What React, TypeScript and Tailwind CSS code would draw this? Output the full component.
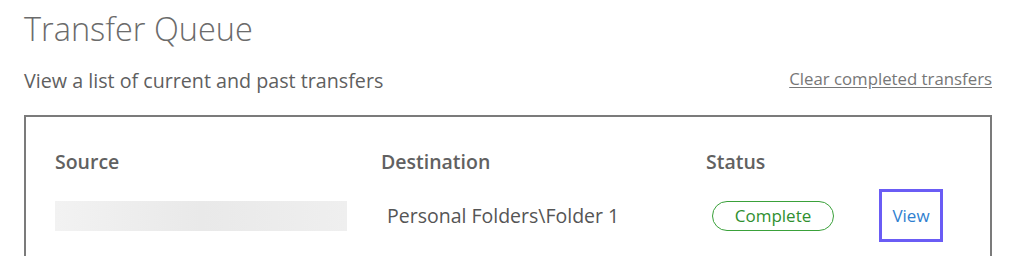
export default function App() {
  return (
    <div className="w-[1012px] h-[256px] overflow-hidden bg-white font-['Open_Sans',sans-serif] text-[#555]">
      <div className="pl-6 pr-5 pt-[7px]">
        <h1 className="text-[32.5px] font-light leading-[44px] text-[#6b6b6b]">Transfer Queue</h1>
        <div className="mt-[17px] flex items-center justify-between">
          <p className="text-[19.7px] leading-[26px] text-[#5f5f5f]">View a list of current and past transfers</p>
          <a href="#" className="text-[16.8px] leading-[22px] text-[#777] underline underline-offset-2 -mt-1">
            Clear completed transfers
          </a>
        </div>
        <div className="mt-[21px] border-2 border-[#7b7b7b] h-[160px] pl-[29px] pt-[32px]">
          <div className="grid grid-cols-[326px_325px_173px_80px] items-center text-[19.5px] font-semibold leading-[26px] text-[#616161]">
            <div>Source</div>
            <div>Destination</div>
            <div>Status</div>
            <div></div>
          </div>
          <div className="mt-[14px] grid grid-cols-[326px_325px_173px_80px] items-center">
            <div className="h-[30px] w-[292px] bg-gradient-to-r from-[#f2f2f2] via-[#e9e9e9] to-[#efefef] blur-[0.5px]"></div>
            <div className="pl-[6px] text-[19.5px] leading-[26px] text-[#555]">Personal Folders\Folder 1</div>
            <div className="pl-[6px]">
              <span className="inline-flex h-[30px] w-[122px] items-center justify-center rounded-full border-[1.5px] border-[#3aa13a] text-[17px] text-[#2f8f2f]">
                Complete
              </span>
            </div>
            <div>
              <a href="#" className="flex h-[53px] w-[64px] items-center justify-center border-[3px] border-[#6a5cf5] text-[17px] text-[#2f7fd0]">
                View
              </a>
            </div>
          </div>
        </div>
      </div>
    </div>
  )
}
